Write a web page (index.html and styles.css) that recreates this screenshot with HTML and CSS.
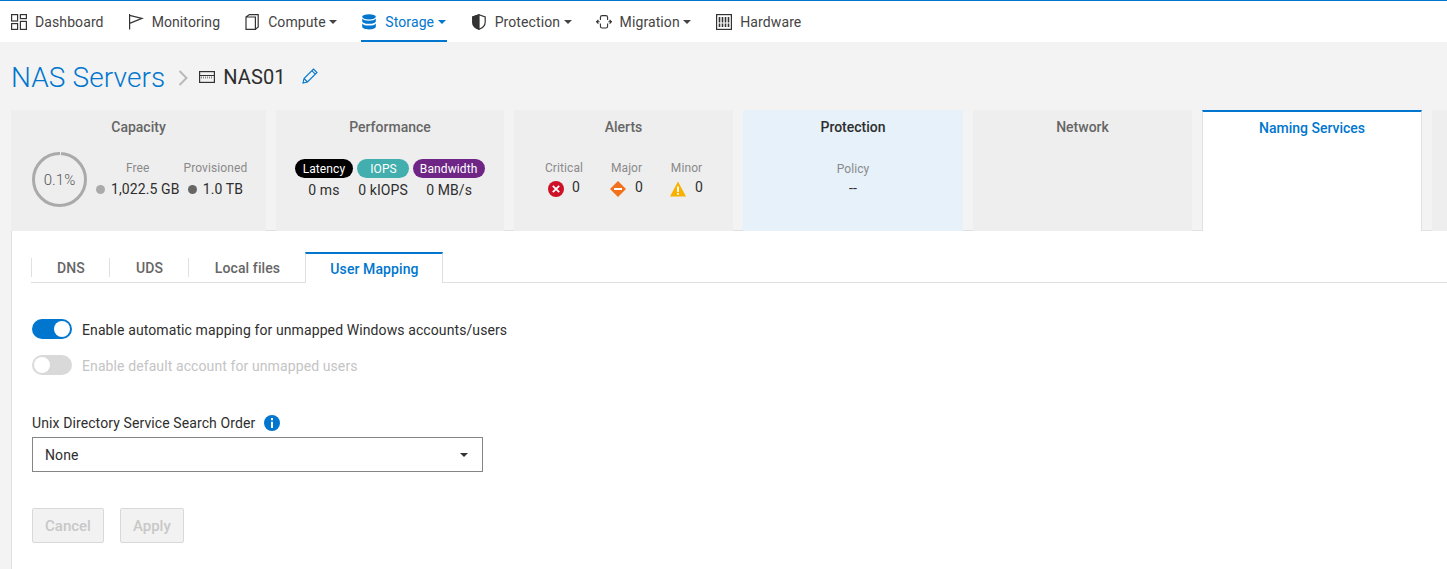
FILE: index.html
```html
<!DOCTYPE html>
<html lang="en">
<head>
    <meta charset="utf-8">
    <title>NAS01</title>
    <link rel="stylesheet" href="styles.css">
</head>

<body>
<nav class="topnav">
    <a class="nav-item">
        <svg class="nav-icon" viewBox="0 0 16 16" fill="none" stroke="#333" stroke-width="1.2"><rect x=".6" y=".6" width="6" height="6.4"/><rect x="9.4" y=".6" width="6" height="4"/><rect x=".6" y="9.6" width="6" height="5.8"/><rect x="9.4" y="7.4" width="6" height="8"/></svg>
        Dashboard
    </a>
    <a class="nav-item">
        <svg class="nav-icon" viewBox="0 0 16 16" fill="none" stroke="#333" stroke-width="1.2"><path d="M1.6 0v15.5M1.6 1.4 14 4.4 1.6 9.4"/></svg>
        Monitoring
    </a>
    <a class="nav-item nav-nudge">
        <svg class="nav-icon nav-icon-tight" viewBox="0 0 16 16" fill="none" stroke="#333" stroke-width="1.2"><path d="M1 3h9.400v12.400H1zM1 3l3.400-2.400h8.800v12.400l-2.800 2.400"/></svg>
        Compute<span class="caret"></span>
    </a>
    <a class="nav-item active">
        <svg class="nav-icon" viewBox="0 0 16 16" fill="#0076ce"><ellipse cx="8" cy="2.8" rx="6.8" ry="2.6"/><path d="M1.2 4.6c1 1.5 3.6 2.2 6.8 2.2s5.8-.7 6.8-2.2v2.6c0 1.4-3 2.6-6.8 2.6S1.2 8.6 1.2 7.2z"/><path d="M1.2 9.4c1 1.5 3.6 2.2 6.8 2.2s5.8-.7 6.8-2.2v3.4c0 1.4-3 2.6-6.8 2.6s-6.8-1.2-6.8-2.6z"/></svg>
        Storage<span class="caret"></span>
    </a>
    <a class="nav-item">
        <svg class="nav-icon" viewBox="0 0 16 16" fill="none" stroke="#333" stroke-width="1.2"><path d="M8 .8 14.2 3v5c0 3.6-2.6 6-6.2 7.2C4.400 14 1.800 11.600 1.800 8V3z"/><path d="M8 .8 1.800 3v5C1.800 11.600 4.400 14 8 15.200z" fill="#333"/></svg>
        Protection<span class="caret"></span>
    </a>
    <a class="nav-item">
        <svg class="nav-icon" viewBox="0 0 16 16" fill="none" stroke="#333" stroke-width="1.1"><path d="M4.400 6V3.400c0-1 .8-1.800 1.800-1.800h3.600c1 0 1.800.8 1.800 1.800V6M4.400 9.600v2.600c0 1 .8 1.800 1.800 1.800h3.600c1 0 1.800-.8 1.800-1.800V9.600M.6 7.800h3M12.400 7.800h3M2.400 6 .6 7.800l1.800 1.800M13.600 6l1.800 1.800-1.800 1.800"/></svg>
        Migration<span class="caret"></span>
    </a>
    <a class="nav-item nav-nudge">
        <svg class="nav-icon" viewBox="0 0 16 16" fill="none" stroke="#333"><rect x=".6" y=".6" width="14.800" height="14.800" stroke-width="1.200"/><path d="M3.500 3v10M6.500 3v10M9.500 3v10M12.500 3v10" stroke-width="1.600" stroke-dasharray="5.500 1"/></svg>
        Hardware
    </a>
</nav>

<main class="page">
    <div class="crumbs">
        <span class="crumb-link">NAS Servers</span>
        <svg class="crumb-sep" viewBox="0 0 10 16" fill="none" stroke="#b8b8b8" stroke-width="2"><path d="M1.500 1 8.500 8l-7 7"/></svg>
        <svg class="crumb-icon" viewBox="0 0 16 12" fill="none" stroke="#333"><rect x=".6" y=".6" width="14.800" height="10.800" stroke-width="1.200"/><path d="M1 4.500h14" stroke-width="1"/><path d="M2 6.500h12" stroke="#888" stroke-width="2" stroke-dasharray="1 1"/></svg>
        <span class="crumb-name">NAS01</span>
        <svg class="crumb-edit" viewBox="0 0 16 16" fill="none" stroke="#0076ce" stroke-width="1.100"><path d="M1 15l1-4.500L11.500 1 15 4.500 5.500 14zM2 10.500 5.500 14M9.800 2.700l3.500 3.500"/></svg>
    </div>

    <div class="cards">
        <section class="card">
            <h3 class="card-title">Capacity</h3>
            <div class="capacity">
                <div class="ring">0.1%</div>
                <div class="cap-col cap-free">
                    <span class="label">Free</span>
                    <span class="value"><i class="dot dot-free"></i>1,022.5 GB</span>
                </div>
                <div class="cap-col">
                    <span class="label">Provisioned</span>
                    <span class="value"><i class="dot dot-prov"></i>1.0 TB</span>
                </div>
            </div>
        </section>

        <section class="card">
            <h3 class="card-title">Performance</h3>
            <div class="perf">
                <div class="perf-col"><span class="pill pill-latency">Latency</span><span class="value">0 ms</span></div>
                <div class="perf-col"><span class="pill pill-iops">IOPS</span><span class="value">0 kIOPS</span></div>
                <div class="perf-col"><span class="pill pill-band">Bandwidth</span><span class="value">0 MB/s</span></div>
            </div>
        </section>

        <section class="card">
            <h3 class="card-title">Alerts</h3>
            <div class="alerts">
                <div class="alert-col">
                    <span class="label">Critical</span>
                    <span class="value alert-val">
                        <svg class="alert-icon" viewBox="0 0 16 16"><circle cx="8" cy="8" r="8" fill="#ce1126"/><path d="M4.800 4.800l6.400 6.400M11.200 4.800l-6.400 6.400" stroke="#fff" stroke-width="1.800"/></svg>
                        0
                    </span>
                </div>
                <div class="alert-col">
                    <span class="label">Major</span>
                    <span class="value alert-val">
                        <svg class="alert-icon" viewBox="0 0 16 16"><path d="M8 0l8 8-8 8-8-8z" fill="#f2711c"/><path d="M4 7h8v2H4z" fill="#fff"/></svg>
                        0
                    </span>
                </div>
                <div class="alert-col">
                    <span class="label">Minor</span>
                    <span class="value alert-val">
                        <svg class="alert-icon" viewBox="0 0 16 16"><path d="M8 .5 16 15.500H0z" fill="#f8b100"/><path d="M7.100 5.500h1.800v5.500H7.100zM7.100 12h1.800v1.800H7.100z" fill="#fff"/></svg>
                        0
                    </span>
                </div>
            </div>
        </section>

        <section class="card card-blue">
            <h3 class="card-title">Protection</h3>
            <div class="policy">
                <span class="label">Policy</span>
                <span class="value">--</span>
            </div>
        </section>

        <section class="card">
            <h3 class="card-title">Network</h3>
        </section>

        <section class="card card-active">
            <h3 class="card-title">Naming Services</h3>
        </section>

        <section class="card"></section>
    </div>

    <div class="panel">
        <div class="tabs">
            <a class="tab tab-dns">DNS</a>
            <a class="tab tab-uds">UDS</a>
            <a class="tab tab-local">Local files</a>
            <a class="tab tab-active">User Mapping</a>
        </div>

        <div class="toggle-row">
            <span class="toggle toggle-on"></span>
            <span class="toggle-text">Enable automatic mapping for unmapped Windows accounts/users</span>
        </div>
        <div class="toggle-row row-disabled">
            <span class="toggle toggle-off"></span>
            <span class="toggle-text">Enable default account for unmapped users</span>
        </div>

        <div class="field-label">
            Unix Directory Service Search Order
            <svg class="info-icon" viewBox="0 0 16 16"><circle cx="8" cy="8" r="8" fill="#0076ce"/><path d="M7 6.800h2V13H7zM7 3h2v2.200H7z" fill="#fff"/></svg>
        </div>
        <div class="select">None<span class="caret caret-dark"></span></div>

        <div class="actions">
            <button class="btn" disabled>Cancel</button>
            <button class="btn" disabled>Apply</button>
        </div>
    </div>
</main>
</body>
</html>
```

FILE: styles.css
```css
* {
    box-sizing: border-box;
}

html, body {
    height: 100%;
}

body {
    margin: 0;
    overflow: hidden;
    background-color: #f3f3f3;
    color: #2e2e2e;
    font-family: Roboto, "Liberation Sans", sans-serif;
    font-size: 14px;
    letter-spacing: .1px;
}

/* Top navigation */

.topnav {
    display: flex;
    height: 42px;
    padding-left: 11px;
    gap: 24px;
    background-color: #fff;
    border-top: 1px solid #0076ce;
}

.nav-item {
    display: flex;
    align-items: center;
    height: 41px;
    padding-top: 2px;
    color: #444;
    border-bottom: 2px solid transparent;
}

.nav-item.active {
    color: #0076ce;
    border-bottom-color: #0076ce;
    padding-right: 1px;
}

.nav-nudge {
    margin-left: 1px;
}

.nav-icon {
    width: 16px;
    height: 16px;
    margin-right: 8px;
}

.nav-icon-tight {
    margin-right: 7px;
}

.caret {
    display: inline-block;
    margin-left: 3.5px;
    border-top: 4px solid currentColor;
    border-left: 4px solid transparent;
    border-right: 4px solid transparent;
}

/* Breadcrumb */

.crumbs {
    display: flex;
    align-items: center;
    height: 68px;
    padding-top: 3px;
}

.crumb-link {
    color: #0076ce;
    font-size: 28px;
    font-weight: 300;
}

.crumb-sep {
    width: 10px;
    height: 16px;
    margin: 0 11px 0 13px;
}

.crumb-icon {
    width: 16px;
    height: 12px;
    margin-right: 8px;
    margin-bottom: 2px;
}

.crumb-name {
    font-size: 20px;
    padding-bottom: 2px;
}

.crumb-edit {
    width: 16px;
    height: 16px;
    margin-left: 16px;
    margin-bottom: 4px;
}

/* Summary cards */

.page {
    padding-left: 11px;
}

.cards {
    display: grid;
    grid-template-columns: 255px 228px 219px 220px 219px 220px 60px;
    column-gap: 10px;
    height: 120px;
}

.card {
    background-color: #eee;
    padding-top: 9px;
    text-align: center;
}

.card-title {
    margin: 0;
    font-size: 14px;
    font-weight: 500;
    line-height: 17px;
    letter-spacing: 0;
    color: #666;
}

.card-blue {
    background-color: #e6f1f9;
}

.card-blue .card-title {
    color: #2e2e2e;
}

.card-active {
    position: relative;
    height: 121px;
    padding-top: 8px;
    background-color: #fff;
    border-top: 2px solid #0076ce;
    border-left: 1px solid #e0e0e0;
    border-right: 1px solid #e0e0e0;
}

.card-active .card-title {
    color: #0076ce;
}

.label {
    display: block;
    font-size: 12px;
    line-height: 14px;
    color: #8a8a8a;
}

.value {
    display: block;
    font-size: 14px;
    line-height: 17px;
    color: #2e2e2e;
}

.capacity {
    display: flex;
    align-items: center;
    margin-top: 16px;
    padding-left: 21px;
}

.ring {
    position: relative;
    display: flex;
    align-items: center;
    justify-content: center;
    width: 55px;
    height: 55px;
    margin-right: 9px;
    border: 3px solid #aaa;
    border-radius: 50%;
    font-size: 15px;
    font-weight: 300;
    color: #555;
}

/* small gap at the start of the used arc */
.ring::before {
    content: "";
    position: absolute;
    top: -3px;
    left: 50%;
    width: 1px;
    height: 3px;
    background-color: #eee;
}

.cap-col {
    padding-bottom: 1px;
}

.cap-col .label {
    margin-bottom: 6px;
}

.cap-free {
    margin-right: 4px;
}

.dot {
    display: inline-block;
    width: 9px;
    height: 9px;
    margin-right: 6px;
    border-radius: 50%;
}

.dot-free {
    background-color: #aaa;
}

.dot-prov {
    background-color: #666;
}

.perf {
    display: flex;
    justify-content: center;
    gap: 4px;
    margin-top: 23px;
}

.perf-col {
    display: flex;
    flex-direction: column;
    align-items: center;
    gap: 4px;
}

.pill {
    height: 19px;
    padding: 0 8px;
    border-radius: 10px;
    font-size: 12px;
    line-height: 21px;
    color: #fff;
}

.pill-latency {
    background-color: #000;
}

.pill-iops {
    background-color: #42aeae;
    padding: 0 12px 0 13px;
}

.pill-band {
    background-color: #6e2585;
    padding: 0 8px 0 7px;
}

.alerts {
    display: flex;
    justify-content: center;
    gap: 27px;
    margin-top: 25px;
    padding-left: 1px;
}

.alert-col {
    display: flex;
    flex-direction: column;
    align-items: center;
    gap: 3px;
}

.alert-val {
    display: flex;
    align-items: center;
    gap: 8px;
}

.alert-col + .alert-col .alert-val {
    gap: 9px;
}

.alert-icon {
    width: 16px;
    height: 16px;
    margin-top: 3px;
}

.policy {
    margin-top: 26px;
}

.policy .value {
    margin-top: 4px;
}

/* Main panel */

.panel {
    height: 339px;
    padding: 21px 0 0 20px;
    background-color: #fff;
    border-top: 1px solid #e0e0e0;
    border-left: 1px solid #e0e0e0;
}

.tabs {
    display: flex;
    height: 31px;
    margin-left: -1px;
    margin-bottom: 36px;
    border-bottom: 1px solid #e0e0e0;
}

.tab {
    display: flex;
    align-items: center;
    justify-content: center;
    height: 19px;
    margin-top: 6px;
    padding-left: 1px;
    font-weight: 500;
    color: #666;
    border-left: 1px solid #e0e0e0;
}

.tab-dns {
    width: 78px;
}

.tab-uds {
    width: 79px;
}

.tab-local {
    width: 117px;
}

.tab-active {
    position: relative;
    width: 138px;
    height: 31px;
    margin-top: 0;
    padding-top: 1px;
    color: #0076ce;
    background-color: #fff;
    border-top: 2px solid #0076ce;
    border-left: 1px solid #e0e0e0;
    border-right: 1px solid #e0e0e0;
}

.toggle-row {
    display: flex;
    align-items: center;
    gap: 10px;
    height: 20px;
    margin-bottom: 16px;
}

.toggle-text {
    padding-top: 2px;
}

.row-disabled {
    color: #c4c4c4;
}

.toggle {
    display: flex;
    align-items: center;
    width: 40px;
    height: 20px;
    padding: 2px;
    border-radius: 10px;
}

.toggle::after {
    content: "";
    width: 16px;
    height: 16px;
    border-radius: 50%;
    background-color: #fff;
}

.toggle-on {
    justify-content: flex-end;
    background-color: #0076ce;
}

.toggle-off {
    background-color: #d9d9d9;
}

.field-label {
    display: flex;
    align-items: center;
    gap: 9px;
    height: 16px;
    margin-top: 40px;
}

.info-icon {
    width: 16px;
    height: 16px;
}

.select {
    display: flex;
    align-items: center;
    justify-content: space-between;
    width: 451px;
    height: 35px;
    margin-top: 6px;
    padding: 0 14px 0 12px;
    background-color: #fff;
    border: 1px solid #858585;
}

.caret-dark {
    color: #333;
}

.actions {
    display: flex;
    gap: 16px;
    margin-top: 36px;
}

.btn {
    height: 35px;
    padding: 0 12px;
    font-family: inherit;
    font-size: 15px;
    font-weight: 500;
    color: #c8c8c8;
    background-color: #f2f2f2;
    border: 1px solid #d9d9d9;
    border-radius: 2px;
}
```
